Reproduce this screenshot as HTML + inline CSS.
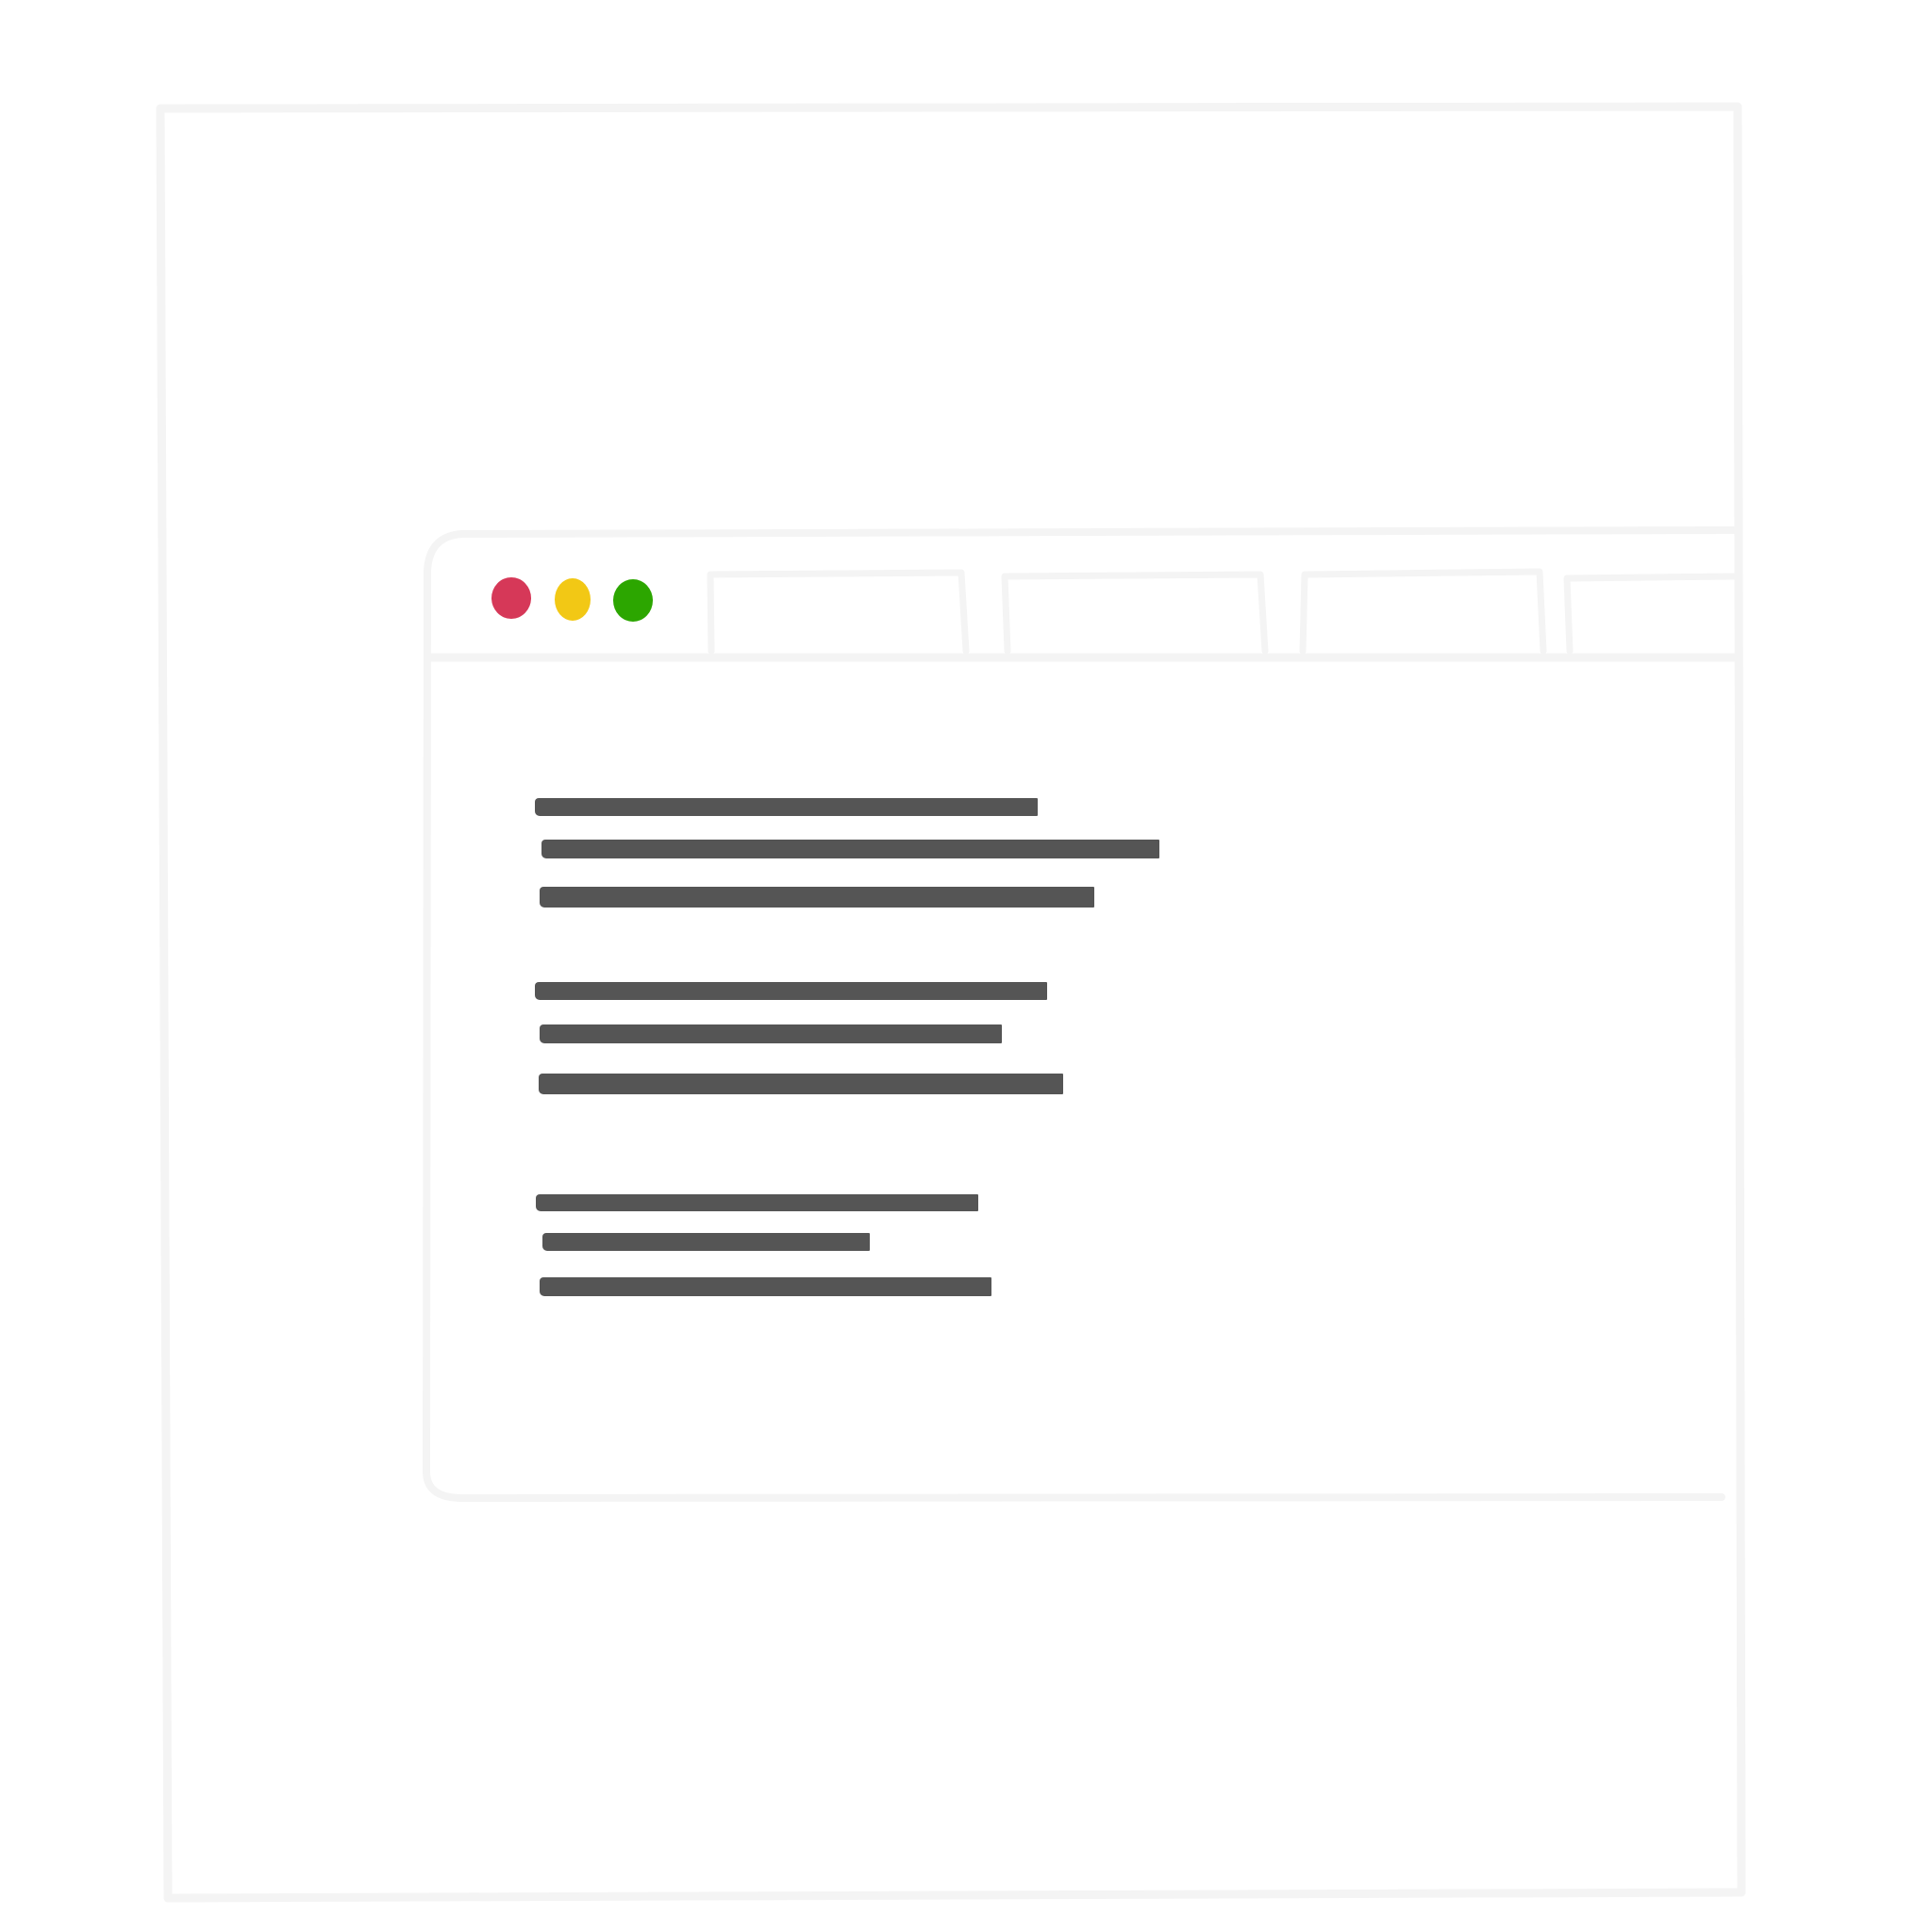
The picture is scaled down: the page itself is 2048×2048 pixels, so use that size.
<!DOCTYPE html>
<html><head><style>
html,body{margin:0;padding:0;background:#fff;}
body{width:2048px;height:2048px;position:relative;overflow:hidden;}
.b{position:absolute;background:#555;border-radius:4px 1px 1px 5px;}
.d{position:absolute;border-radius:50%;}
</style></head><body>
<svg width="2048" height="2048" style="position:absolute;left:0;top:0" fill="none" stroke="#f4f4f4" stroke-linecap="round" stroke-linejoin="round">
<!-- outer frame -->
<path d="M170 115 L1842 113 L1846 2006 L178 2012 Z" stroke-width="9"/>
<!-- browser -->
<path d="M1838 562 L490 566 Q455 568 453 605 L452 1560 Q452 1588 490 1588 L1825 1587" stroke-width="8"/>
<path d="M455 697 L1838 697" stroke-width="9"/>
<!-- tabs -->
<path d="M754 690 L753 609 L1019 607 L1024 690" stroke-width="7"/>
<path d="M1068 690 L1065 611 L1336 609 L1341 690" stroke-width="7"/>
<path d="M1381 690 L1383 609 L1632 606 L1636 690" stroke-width="7"/>
<path d="M1664 690 L1661 613 L1838 611" stroke-width="7"/>
</svg>
<div class="d" style="left:521px;top:612px;width:42px;height:44px;background:#d63858"></div>
<div class="d" style="left:588px;top:613px;width:38px;height:45px;background:#f2c815"></div>
<div class="d" style="left:650px;top:614px;width:42px;height:45px;background:#2ca600"></div>
<div class="b" style="left:567px;top:846px;width:533px;height:19px"></div>
<div class="b" style="left:574px;top:890px;width:655px;height:20px"></div>
<div class="b" style="left:572px;top:940px;width:588px;height:22px"></div>
<div class="b" style="left:567px;top:1041px;width:543px;height:19px"></div>
<div class="b" style="left:572px;top:1086px;width:490px;height:20px"></div>
<div class="b" style="left:571px;top:1138px;width:556px;height:22px"></div>
<div class="b" style="left:568px;top:1266px;width:469px;height:18px"></div>
<div class="b" style="left:575px;top:1307px;width:347px;height:19px"></div>
<div class="b" style="left:572px;top:1354px;width:479px;height:20px"></div>
</body></html>
